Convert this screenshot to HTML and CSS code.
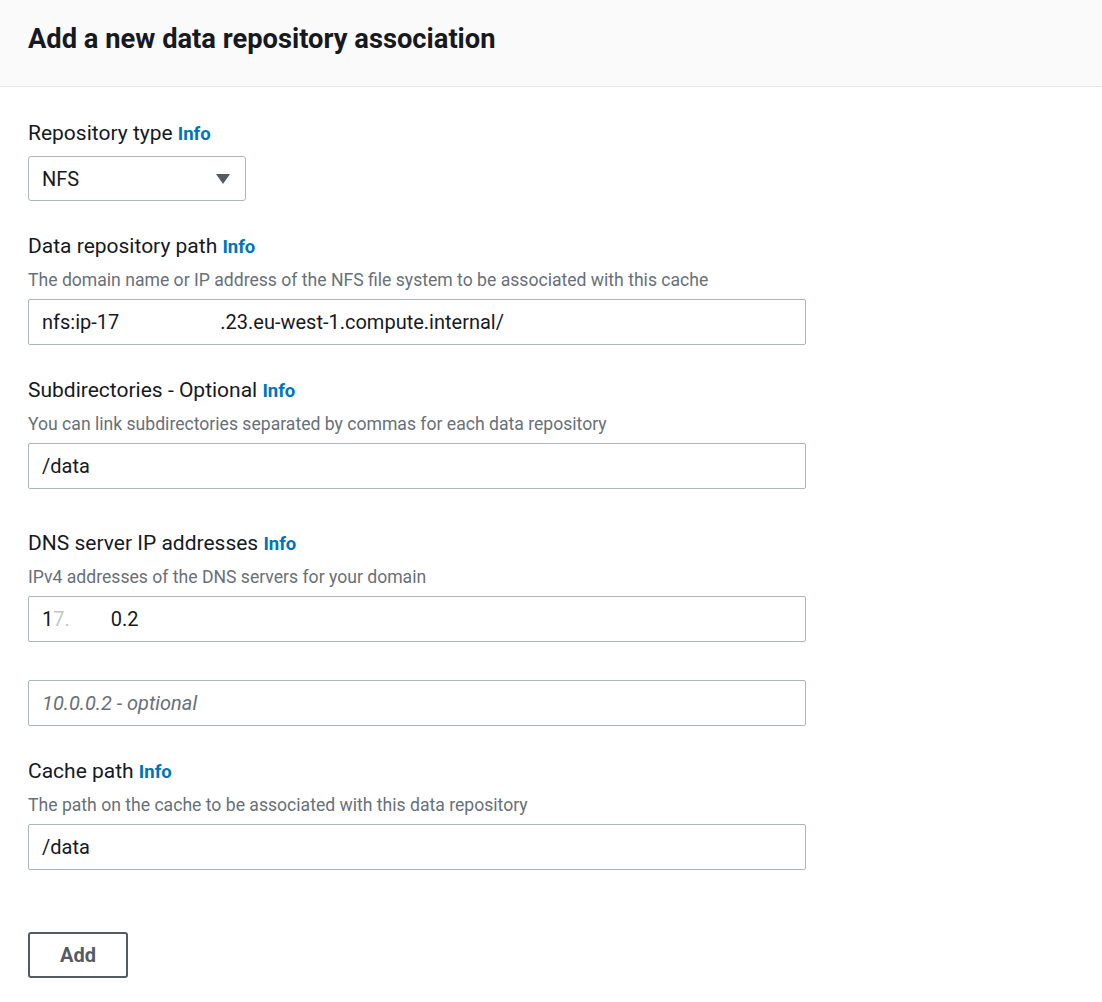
FILE: index.html
```html
<!DOCTYPE html>
<html lang="en">
<head>
<meta charset="utf-8">
<title>Add a new data repository association</title>
<link rel="stylesheet" href="styles.css">
</head>
<body>
<div class="panel">
  <header class="panel-header">
    <h2 class="panel-title">Add a new data repository association</h2>
  </header>
  <div class="panel-body">
    <div class="field field-first">
      <div class="label">Repository type <a class="info" href="#">Info</a></div>
      <div class="select">
        <span class="select-value">NFS</span>
        <svg class="caret" width="16" height="12" viewBox="0 0 16 12"><polygon points="1,1 15,1 8,11" fill="#545b64"/></svg>
      </div>
    </div>

    <div class="field">
      <div class="label">Data repository path <a class="info" href="#">Info</a></div>
      <div class="desc">The domain name or IP address of the NFS file system to be associated with this cache</div>
      <div class="input"><span>nfs:ip-17</span><span class="gap gap-path"></span><span>.23.eu-west-1.compute.internal/</span></div>
    </div>

    <div class="field">
      <div class="label">Subdirectories - Optional <a class="info" href="#">Info</a></div>
      <div class="desc">You can link subdirectories separated by commas for each data repository</div>
      <div class="input">/data</div>
    </div>

    <div class="field field-dns">
      <div class="label">DNS server IP addresses <a class="info" href="#">Info</a></div>
      <div class="desc">IPv4 addresses of the DNS servers for your domain</div>
      <div class="input"><span>1</span><span class="faint">7.</span><span class="gap gap-dns"></span><span>0.2</span></div>
      <div class="input input-second placeholder">10.0.0.2 - optional</div>
    </div>

    <div class="field">
      <div class="label">Cache path <a class="info" href="#">Info</a></div>
      <div class="desc">The path on the cache to be associated with this data repository</div>
      <div class="input">/data</div>
    </div>

    <div class="actions">
      <button class="btn" type="button">Add</button>
    </div>
  </div>
</div>
</body>
</html>
```

FILE: styles.css
```css
html, body {
  margin: 0;
  padding: 0;
  background: #ffffff;
}

body {
  font-family: Roboto, "Liberation Sans", Arial, sans-serif;
  color: #16191f;
}

.panel-header {
  background: #fafafa;
  border-bottom: 1px solid #e4e7e7;
  height: 87px;
  box-sizing: border-box;
  padding: 0 28px;
  display: flex;
  align-items: center;
}

.panel-title {
  margin: 0;
  font-size: 27.3px;
  font-weight: 700;
  color: #16191f;
  padding-bottom: 8px;
}

.panel-body {
  padding: 0 28px;
}

.field {
  margin-top: 32px;
}

.field-first {
  margin-top: 33px;
}

.field-dns {
  margin-top: 41px;
}

.label {
  font-size: 21px;
  line-height: 26px;
  color: #16191f;
}

.info {
  font-size: 18.5px;
  font-weight: 700;
  color: #0073bb;
  text-decoration: none;
}

.desc {
  font-size: 17.6px;
  line-height: 24px;
  color: #687078;
  margin-top: 8px;
}

.select {
  margin-top: 9px;
  width: 218px;
  height: 45px;
  box-sizing: border-box;
  border: 1px solid #aab7b8;
  border-radius: 3px;
  display: flex;
  align-items: center;
  justify-content: space-between;
  padding: 0 14px 0 13px;
  font-size: 20px;
}

.input {
  margin-top: 7px;
  width: 778px;
  height: 46px;
  box-sizing: border-box;
  border: 1px solid #aab7b8;
  border-radius: 2px;
  display: flex;
  align-items: center;
  padding: 0 13px;
  font-size: 20px;
  color: #16191f;
  white-space: pre;
}

.input-second {
  margin-top: 38px;
}

.placeholder {
  color: #687078;
  font-style: italic;
}

.faint {
  color: #c4c7ca;
}

.gap {
  display: inline-block;
}

.gap-path {
  width: 101px;
}

.gap-dns {
  width: 41px;
}

.actions {
  margin-top: 62px;
}

.btn {
  width: 100px;
  height: 46px;
  box-sizing: border-box;
  border: 2px solid #545b64;
  border-radius: 3px;
  background: #ffffff;
  color: #545b64;
  font-family: Roboto, "Liberation Sans", Arial, sans-serif;
  font-size: 20px;
  font-weight: 700;
  padding: 0;
}
```
